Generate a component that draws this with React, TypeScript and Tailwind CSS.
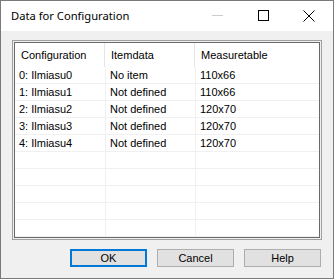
const rows = [
  ["0: Ilmiasu0", "No item", "110x66"],
  ["1: Ilmiasu1", "Not defined", "110x66"],
  ["2: Ilmiasu2", "Not defined", "120x70"],
  ["3: Ilmiasu3", "Not defined", "120x70"],
  ["4: Ilmiasu4", "Not defined", "120x70"],
  ["", "", ""],
  ["", "", ""],
  ["", "", ""],
  ["", "", ""],
  ["", "", ""],
];

export default function App() {
  return (
    <div className="w-[334px] h-[279px] border border-[#7a7a7a] bg-[#f0f0f0] flex flex-col font-['Liberation_Sans',sans-serif] text-[11px] text-black">
      {/* Title bar */}
      <div className="h-[30px] bg-white flex items-center relative">
        <span className="pl-[10px] text-[11.2px] font-['Noto_Sans',sans-serif] leading-none">Data for Configuration</span>
        <div className="absolute left-[211px] top-[14px] w-[11px] h-px bg-[#cccccc]" />
        <div className="absolute left-[257px] top-[9px] w-[11px] h-[11px] border border-black" />
        <svg className="absolute left-[302px] top-[9px]" width="12" height="12" viewBox="0 0 12 12">
          <path d="M0.5 0.5 L11.5 11.5 M11.5 0.5 L0.5 11.5" stroke="#000" strokeWidth="1" />
        </svg>
      </div>

      {/* Client area */}
      <div className="flex-1 flex flex-col px-[11px] pt-[9px]">
        <div className="h-[200px] border border-[#a0a0a0] p-px">
          <div className="h-full border border-[#696969] bg-white flex flex-col">
            <div className="h-[24px] flex shrink-0">
              <div className="w-[90px] border-r border-[#e5e5e5] pl-[6px] flex items-center">Configuration</div>
              <div className="w-[90px] border-r border-[#e5e5e5] pl-[6px] flex items-center">Itemdata</div>
              <div className="flex-1 pl-[6px] flex items-center">Measuretable</div>
            </div>
            {rows.map((r, i) => (
              <div key={i} className="h-[17px] flex shrink-0 border-b border-[#f0f0f0]">
                <div className="w-[91px] border-r border-[#f0f0f0] pl-[4px] flex items-center">{r[0]}</div>
                <div className="w-[90px] border-r border-[#f0f0f0] pl-[4px] flex items-center">{r[1]}</div>
                <div className="flex-1 pl-[4px] flex items-center">{r[2]}</div>
              </div>
            ))}
          </div>
        </div>

        <div className="flex justify-end gap-[10px] pt-[9px] pr-px">
          <button className="w-[77px] h-[18px] bg-[#e1e1e1] border-2 border-[#0078d7] flex items-center justify-center">OK</button>
          <button className="w-[77px] h-[18px] bg-[#e1e1e1] border border-[#adadad] flex items-center justify-center">Cancel</button>
          <button className="w-[77px] h-[18px] bg-[#e1e1e1] border border-[#adadad] flex items-center justify-center">Help</button>
        </div>
      </div>
    </div>
  );
}
